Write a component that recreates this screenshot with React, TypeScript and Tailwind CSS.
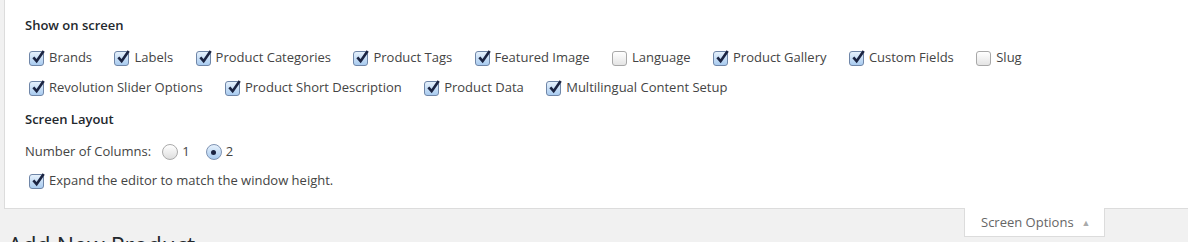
import React from 'react';

type Item = { label: string; checked: boolean };

const rowOne: Item[] = [
  { label: 'Brands', checked: true },
  { label: 'Labels', checked: true },
  { label: 'Product Categories', checked: true },
  { label: 'Product Tags', checked: true },
  { label: 'Featured Image', checked: true },
  { label: 'Language', checked: false },
  { label: 'Product Gallery', checked: true },
  { label: 'Custom Fields', checked: true },
  { label: 'Slug', checked: false },
];

const rowTwo: Item[] = [
  { label: 'Revolution Slider Options', checked: true },
  { label: 'Product Short Description', checked: true },
  { label: 'Product Data', checked: true },
  { label: 'Multilingual Content Setup', checked: true },
];

const CheckBox: React.FC<{ checked: boolean }> = ({ checked }) => (
  <span
    className={`relative inline-block h-[15px] w-[15px] shrink-0 rounded-[3px] border ${
      checked
        ? 'border-[#6f86a8] bg-gradient-to-b from-[#e6f1fc] to-[#a9cbef]'
        : 'border-[#a8a8a8] bg-gradient-to-b from-[#ffffff] to-[#e4e4e4]'
    }`}
  >
    {checked && (
      <svg viewBox="0 0 16 16" className="absolute left-[1px] top-[-3px] h-[16px] w-[15px]">
        <path d="M2.5 8.5 L6 12.5 L13.5 1.5" fill="none" stroke="#1b2442" strokeWidth="2.8" strokeLinejoin="miter" />
      </svg>
    )}
  </span>
);

const Radio: React.FC<{ checked: boolean }> = ({ checked }) => (
  <span
    className={`relative inline-flex h-[16px] w-[16px] shrink-0 items-center justify-center rounded-full border ${
      checked
        ? 'border-[#7e93b3] bg-gradient-to-b from-[#e6f1fc] to-[#a9cbef]'
        : 'border-[#aaaaaa] bg-gradient-to-b from-[#ffffff] to-[#dedede]'
    }`}
  >
    {checked && <span className="h-[5px] w-[5px] rounded-full bg-[#1b2442]" />}
  </span>
);

const Option: React.FC<Item> = ({ label, checked }) => (
  <label className="mr-[22.4px] flex items-center gap-[5px]">
    <CheckBox checked={checked} />
    <span>{label}</span>
  </label>
);

export default function App() {
  return (
    <div className="h-[242px] w-[1188px] overflow-hidden bg-[#f1f1f1] font-['Open_Sans',sans-serif] text-[13px] text-[#444]">
      {/* Screen options panel */}
      <div className="ml-[4px] border-b border-l border-[#dcdcdc] bg-white pb-[17px] pl-[20px] pt-[15px]">
        <div className="font-semibold leading-[20px] text-[#23282d]">Show on screen</div>
        <div className="mt-[13px] flex h-[20px] items-center pl-[4px]">
          {rowOne.map((it) => (
            <Option key={it.label} {...it} />
          ))}
        </div>
        <div className="mt-[10px] flex h-[20px] items-center pl-[4px]">
          {rowTwo.map((it) => (
            <Option key={it.label} {...it} />
          ))}
        </div>
        <div className="mt-[11px] font-semibold leading-[20px] text-[#23282d]">Screen Layout</div>
        <div className="mt-[13px] flex h-[20px] items-center">
          <span className="mr-[11px]">Number of Columns:</span>
          <label className="mr-[16px] flex items-center gap-[4px]">
            <Radio checked={false} />
            <span>1</span>
          </label>
          <label className="flex items-center gap-[4px]">
            <Radio checked={true} />
            <span>2</span>
          </label>
        </div>
        <div className="mt-[9px] flex h-[20px] items-center pl-[4px]">
          <Option label="Expand the editor to match the window height." checked={true} />
        </div>
      </div>

      {/* Tab + page heading */}
      <div className="flex items-start justify-between">
        <h1 className="ml-[8px] mt-[22px] text-[23px] font-normal leading-[29px] text-[#23282d]">Add New Product</h1>
        <div className="mr-[83px] mt-[-1px] flex h-[29px] w-[141px] items-center border-x border-b border-[#dcdcdc] bg-white pl-[16px] pt-[1px] text-[#666]">
          <span>Screen Options</span>
          <span className="ml-[8px] text-[9px] text-[#aaa]">▲</span>
        </div>
      </div>
    </div>
  );
}
